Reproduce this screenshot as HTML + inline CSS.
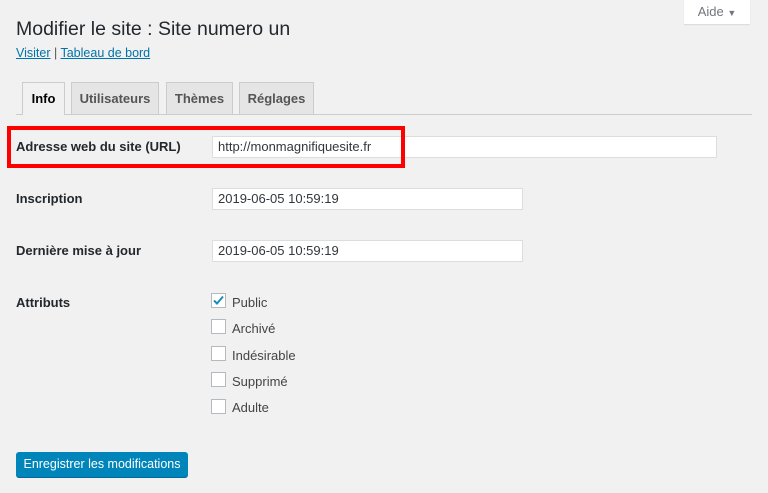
<!DOCTYPE html><html><head><meta charset="utf-8"><style>
body{margin:0;width:768px;height:493px;background:#f1f1f1;font-family:"Liberation Sans",sans-serif;color:#23282d;position:relative;overflow:hidden}
.a{position:absolute}
h1{position:absolute;left:16px;top:18px;margin:0;font-size:19.5px;font-weight:400;color:#23282d}
.links{left:16px;top:46px;font-size:12.5px;color:#555}
.links span{color:#0073aa;text-decoration:underline}
.tab{position:absolute;top:82px;height:32px;box-sizing:border-box;border:1px solid #ccc;border-bottom:none;background:#e5e5e5;font-size:13px;font-weight:700;color:#555;text-align:center;line-height:31px}
.line{left:16px;top:114px;width:736px;height:1px;background:#ccc}
.lbl{font-size:13px;font-weight:700;color:#23282d}
.inp{position:absolute;height:22px;box-sizing:border-box;border:1px solid #ddd;background:#fff;font-size:13px;padding-left:5px;line-height:20px;color:#32373c}
.cb{position:absolute;left:211px;width:15px;height:15px;box-sizing:border-box;border:1px solid #b4b9be;background:#fff}
.cl{position:absolute;left:232px;font-size:13px;color:#444}
</style></head><body>
<div class="a" style="left:684px;top:-1px;width:66px;height:25px;background:#fff;box-shadow:0 1px 1px rgba(0,0,0,.1);font-size:13px;color:#72777c;line-height:25px;text-align:center">Aide <span style="font-size:9px">▼</span></div>
<h1>Modifier le site : Site numero un</h1>
<div class="a links"><span>Visiter</span> | <span>Tableau de bord</span></div>
<div class="a line"></div>
<div class="tab" style="left:22px;width:43px;background:#f1f1f1;color:#000;height:33px">Info</div>
<div class="tab" style="left:71px;width:88px">Utilisateurs</div>
<div class="tab" style="left:166px;width:67px">Thèmes</div>
<div class="tab" style="left:239px;width:75px">Réglages</div>
<div class="inp" style="left:212px;top:136px;width:505px">http://monmagnifiquesite.fr</div>
<div class="a" style="left:7px;top:126px;width:398px;height:42px;box-sizing:border-box;border:4px solid #ff0000"></div>
<div class="a lbl" style="left:16px;top:139px">Adresse web du site (URL)</div>
<div class="a lbl" style="left:16px;top:191px">Inscription</div>
<div class="inp" style="left:212px;top:188px;width:311px">2019-06-05 10:59:19</div>
<div class="a lbl" style="left:16px;top:243px">Dernière mise à jour</div>
<div class="inp" style="left:212px;top:240px;width:311px">2019-06-05 10:59:19</div>
<div class="a lbl" style="left:16px;top:295px">Attributs</div>
<div class="cb" style="top:293px"><svg width="13" height="13" style="position:absolute;left:0;top:0"><path d="M2 6.5 L5 9.5 L11 2.5" stroke="#1e8cbe" stroke-width="2" fill="none"/></svg></div><div class="cl" style="top:295px">Public</div>
<div class="cb" style="top:319px"></div><div class="cl" style="top:321px">Archivé</div>
<div class="cb" style="top:346px"></div><div class="cl" style="top:348px">Indésirable</div>
<div class="cb" style="top:372px"></div><div class="cl" style="top:374px">Supprimé</div>
<div class="cb" style="top:399px"></div><div class="cl" style="top:400px">Adulte</div>
<div class="a" style="left:16px;top:452px;width:172px;height:25px;background:#0085ba;border-radius:3px;box-shadow:0 1px 0 #006799;color:#fff;font-size:12.5px;line-height:25px;text-align:center">Enregistrer les modifications</div>
</body></html>
